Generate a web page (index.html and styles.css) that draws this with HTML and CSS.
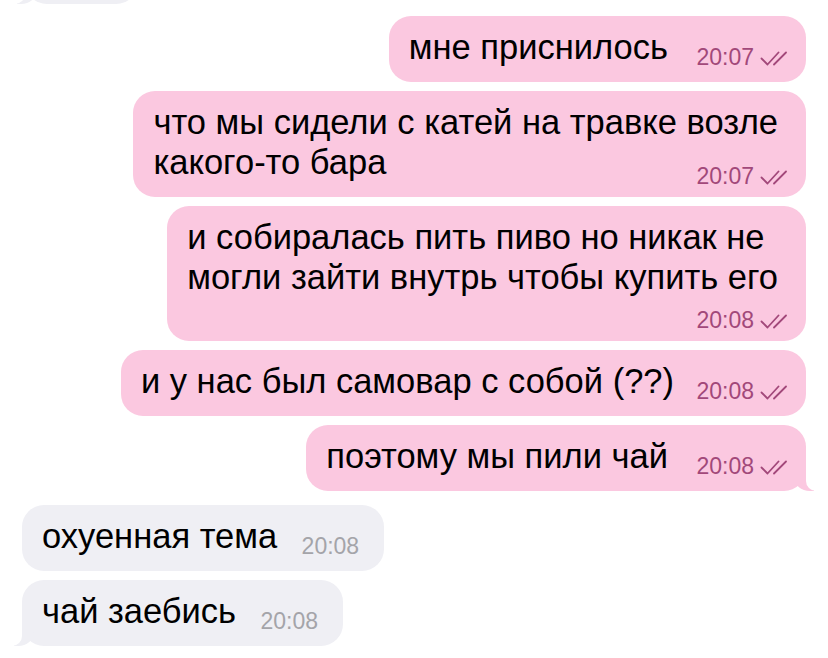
FILE: index.html
```html
<!DOCTYPE html>
<html lang="ru">
<head>
    <meta charset="UTF-8">
    <title>Чат</title>

    <link rel="stylesheet" href="styles.css">
</head>
<body>
    <div class="chat">
        <div class="bubble in tail cut"></div>

        <p class="bubble out short">
            <span class="body"><span class="text">мне приснилось</span><span class="spacer"></span></span>
            <span class="meta">20:07<svg class="check" width="30" height="16" viewBox="0 0 30 16"><path d="M1.5 8.5l6 6L18.5 2.5M14 14.5L26 2.5"/></svg></span>
        </p>

        <p class="bubble out">
            <span class="body"><span class="text">что мы сидели с катей на травке возле<br>какого-то бара</span><span class="spacer"></span></span>
            <span class="meta">20:07<svg class="check" width="30" height="16" viewBox="0 0 30 16"><path d="M1.5 8.5l6 6L18.5 2.5M14 14.5L26 2.5"/></svg></span>
        </p>

        <p class="bubble out">
            <span class="body"><span class="text">и собиралась пить пиво но никак не<br>могли зайти внутрь чтобы купить его</span><br><span class="spacer"></span></span>
            <span class="meta">20:08<svg class="check" width="30" height="16" viewBox="0 0 30 16"><path d="M1.5 8.5l6 6L18.5 2.5M14 14.5L26 2.5"/></svg></span>
        </p>

        <p class="bubble out short">
            <span class="body"><span class="text">и у нас был самовар с собой (??)</span><span class="spacer narrow"></span></span>
            <span class="meta">20:08<svg class="check" width="30" height="16" viewBox="0 0 30 16"><path d="M1.5 8.5l6 6L18.5 2.5M14 14.5L26 2.5"/></svg></span>
        </p>

        <p class="bubble out short tail">
            <span class="body"><span class="text">поэтому мы пили чай</span><span class="spacer"></span></span>
            <span class="meta">20:08<svg class="check" width="30" height="16" viewBox="0 0 30 16"><path d="M1.5 8.5l6 6L18.5 2.5M14 14.5L26 2.5"/></svg></span>
        </p>

        <p class="bubble in short first">
            <span class="body"><span class="text">охуенная тема</span><span class="spacer"></span></span>
            <span class="meta">20:08</span>
        </p>

        <p class="bubble in short tail">
            <span class="body"><span class="text">чай заебись</span><span class="spacer"></span></span>
            <span class="meta">20:08</span>
        </p>
    </div>
</body>
</html>
```

FILE: styles.css
```css
body {
    margin: 0;
    background: #fff;
    font-family: "Liberation Sans", Arial, sans-serif;
}

.chat {
    display: flex;
    flex-direction: column;
    align-items: flex-start;
    gap: 9px;
    padding: 0 22px;
}

/* пузырь: текст и время лежат в одной ячейке грида, время прижато в правый нижний угол */
.bubble {
    position: relative;
    display: grid;
    margin: 0;
    max-width: 700px;
    box-sizing: border-box;
    padding: 11px 16px 10px 20px;
    border-radius: 22px;
    color: #000;
}
.bubble > * { grid-area: 1 / 1; }

.out {
    align-self: flex-end;
    background: #fbc8e0;
}
.in {
    padding-right: 25px;
    background: #efeff4;
}
.in.first { margin-top: 5px; }

/* обрезанное сообщение сверху */
.cut {
    width: 113px;
    height: 66px;
    margin-top: -62px;
    margin-bottom: 3px;
    margin-left: 3px;
}

/* маленький strut, чтобы строка только с местом под время была невысокой */
.body {
    padding-right: 12px;
    font-size: 22px;
    line-height: 28px;
}
.in .body { padding-right: 0; }

.text {
    font-size: 34.5px;
    line-height: 40px;
}

/* место под время в конце последней строки */
.spacer {
    display: inline-block;
    width: 110px;
    height: 22px;
    vertical-align: -13px;
}
.spacer.narrow { width: 104px; }
.in .spacer { width: 82px; }

.meta {
    align-self: end;
    justify-self: end;
    font-size: 23px;
    line-height: 22px;
    white-space: nowrap;
    color: #a2487a;
}
.short .meta { margin-bottom: 4px; }
.in .meta { color: #a4a4a9; }

.check {
    margin-left: 6px;
    vertical-align: -1px;
    fill: none;
    stroke: currentColor;
    stroke-width: 1.8;
    stroke-linecap: round;
    stroke-linejoin: round;
}

/* хвостик пузыря */
.tail::before,
.tail::after {
    content: "";
    position: absolute;
    bottom: 0;
    height: 25px;
}
.out.tail::before {
    right: -8px;
    width: 20px;
    background: #fbc8e0;
    border-bottom-left-radius: 16px 14px;
}
.out.tail::after {
    right: -26px;
    width: 26px;
    background: #fff;
    border-bottom-left-radius: 10px;
}
.in.tail::before {
    left: -8px;
    width: 20px;
    background: #efeff4;
    border-bottom-right-radius: 16px 14px;
}
.in.tail::after {
    left: -26px;
    width: 26px;
    background: #fff;
    border-bottom-right-radius: 10px;
}
```
